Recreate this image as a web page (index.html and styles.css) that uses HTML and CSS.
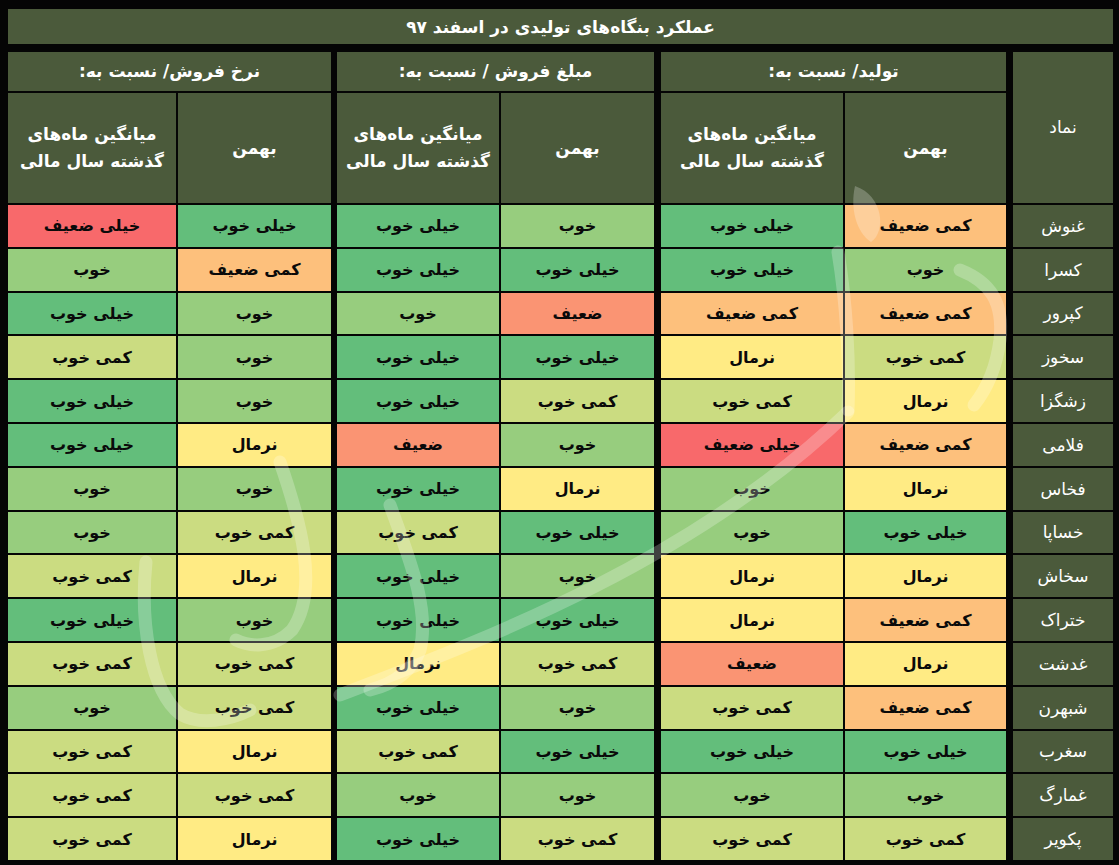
FILE: index.html
```html
<!DOCTYPE html>
<html lang="fa" dir="rtl">
<head>
<meta charset="utf-8">
<title>عملکرد بنگاه‌های تولیدی در اسفند ۹۷</title>
<link rel="stylesheet" href="styles.css">
</head>
<body>
<div class="frame">
  <div class="title">عملکرد بنگاه‌های تولیدی در اسفند ٩٧</div>
  <div class="grid">
    <div class="h sym-h">نماد</div>
    <div class="h grp g1">تولید/ نسبت به:</div>
    <div class="h grp g2">مبلغ فروش / نسبت به:</div>
    <div class="h grp g3">نرخ فروش/ نسبت به:</div>
    <div class="h sub s3">بهمن</div>
    <div class="h sub s4">میانگین ماه‌های<br>گذشته سال مالی</div>
    <div class="h sub s6">بهمن</div>
    <div class="h sub s7">میانگین ماه‌های<br>گذشته سال مالی</div>
    <div class="h sub s9">بهمن</div>
    <div class="h sub s10">میانگین ماه‌های<br>گذشته سال مالی</div>

    <div class="row"><div class="sym">غنوش</div><div class="v2">کمی ضعیف</div><div class="v6">خیلی خوب</div><div class="v5">خوب</div><div class="v6">خیلی خوب</div><div class="v6">خیلی خوب</div><div class="v0">خیلی ضعیف</div></div>
    <div class="row"><div class="sym">کسرا</div><div class="v5">خوب</div><div class="v6">خیلی خوب</div><div class="v6">خیلی خوب</div><div class="v6">خیلی خوب</div><div class="v2">کمی ضعیف</div><div class="v5">خوب</div></div>
    <div class="row"><div class="sym">کپرور</div><div class="v2">کمی ضعیف</div><div class="v2">کمی ضعیف</div><div class="v1">ضعیف</div><div class="v5">خوب</div><div class="v5">خوب</div><div class="v6">خیلی خوب</div></div>
    <div class="row"><div class="sym">سخوز</div><div class="v4">کمی خوب</div><div class="v3">نرمال</div><div class="v6">خیلی خوب</div><div class="v6">خیلی خوب</div><div class="v5">خوب</div><div class="v4">کمی خوب</div></div>
    <div class="row"><div class="sym">زشگزا</div><div class="v3">نرمال</div><div class="v4">کمی خوب</div><div class="v4">کمی خوب</div><div class="v6">خیلی خوب</div><div class="v5">خوب</div><div class="v6">خیلی خوب</div></div>
    <div class="row"><div class="sym">فلامی</div><div class="v2">کمی ضعیف</div><div class="v0">خیلی ضعیف</div><div class="v5">خوب</div><div class="v1">ضعیف</div><div class="v3">نرمال</div><div class="v6">خیلی خوب</div></div>
    <div class="row"><div class="sym">فخاس</div><div class="v3">نرمال</div><div class="v5">خوب</div><div class="v3">نرمال</div><div class="v6">خیلی خوب</div><div class="v5">خوب</div><div class="v5">خوب</div></div>
    <div class="row"><div class="sym">خساپا</div><div class="v6">خیلی خوب</div><div class="v5">خوب</div><div class="v6">خیلی خوب</div><div class="v4">کمی خوب</div><div class="v4">کمی خوب</div><div class="v5">خوب</div></div>
    <div class="row"><div class="sym">سخاش</div><div class="v3">نرمال</div><div class="v3">نرمال</div><div class="v5">خوب</div><div class="v6">خیلی خوب</div><div class="v3">نرمال</div><div class="v4">کمی خوب</div></div>
    <div class="row"><div class="sym">ختراک</div><div class="v2">کمی ضعیف</div><div class="v3">نرمال</div><div class="v6">خیلی خوب</div><div class="v6">خیلی خوب</div><div class="v5">خوب</div><div class="v6">خیلی خوب</div></div>
    <div class="row"><div class="sym">غدشت</div><div class="v3">نرمال</div><div class="v1">ضعیف</div><div class="v4">کمی خوب</div><div class="v3">نرمال</div><div class="v4">کمی خوب</div><div class="v4">کمی خوب</div></div>
    <div class="row"><div class="sym">شبهرن</div><div class="v2">کمی ضعیف</div><div class="v4">کمی خوب</div><div class="v5">خوب</div><div class="v6">خیلی خوب</div><div class="v4">کمی خوب</div><div class="v5">خوب</div></div>
    <div class="row"><div class="sym">سغرب</div><div class="v6">خیلی خوب</div><div class="v6">خیلی خوب</div><div class="v6">خیلی خوب</div><div class="v4">کمی خوب</div><div class="v3">نرمال</div><div class="v4">کمی خوب</div></div>
    <div class="row"><div class="sym">غمارگ</div><div class="v5">خوب</div><div class="v5">خوب</div><div class="v5">خوب</div><div class="v5">خوب</div><div class="v4">کمی خوب</div><div class="v4">کمی خوب</div></div>
    <div class="row"><div class="sym">پکویر</div><div class="v4">کمی خوب</div><div class="v4">کمی خوب</div><div class="v4">کمی خوب</div><div class="v6">خیلی خوب</div><div class="v3">نرمال</div><div class="v4">کمی خوب</div></div>
  </div>
  <svg class="watermark" width="1119" height="865" viewBox="0 0 1119 865" aria-hidden="true">
    <g class="wm">
      <path d="M340 695 C470 645 690 565 848 412"/>
      <path d="M838 252 C846 300 850 360 848 410"/>
      <path d="M960 270 C990 282 1004 302 1000 340 C996 370 986 390 974 405"/>
      <path d="M280 462 C300 520 320 590 292 630 C272 650 248 646 236 640"/>
      <path d="M390 505 C410 560 430 610 420 650 C410 675 390 685 370 690"/>
      <path d="M146 562 C140 622 150 690 180 714 C200 726 230 720 250 710"/>
    </g>
    <path class="wm-fill" d="M855 186 C884 196 886 232 871 242 C856 232 850 208 855 186 Z"/>
  </svg>
</div>
</body>
</html>
```

FILE: styles.css
```css
html, body {
  margin: 0;
  padding: 0;
  background: #000;
}

.frame {
  position: relative;
  width: 1119px;
  height: 865px;
  box-sizing: border-box;
  padding: 9px 6px 5px 8px;
  background: #050505;
  direction: rtl;
  font-family: "DejaVu Sans", "Noto Sans", sans-serif;
}

.title {
  height: 35px;
  margin-bottom: 8px;
  background: #4b5a3b;
  color: #fff;
  font-size: 17px;
  font-weight: bold;
  display: flex;
  align-items: center;
  justify-content: center;
}

.grid {
  display: grid;
  direction: rtl;
  grid-template-columns: 100px 3px 161px 182px 3px 153px 162px 2px 153px 168px;
  grid-template-rows: 39px 110px repeat(15, 41.8px);
  gap: 2px;
  height: 808px;
}

.h {
  background: #4b5a3b;
  color: #fff;
  font-size: 17px;
  font-weight: bold;
  display: flex;
  align-items: center;
  justify-content: center;
  text-align: center;
  line-height: 27px;
}

.sym-h { grid-row: 1 / 3; grid-column: 1; font-weight: normal; }
.g1 { grid-row: 1; grid-column: 3 / 5; }
.g2 { grid-row: 1; grid-column: 6 / 8; }
.g3 { grid-row: 1; grid-column: 9 / 11; }
.sub { grid-row: 2; }
.s3 { grid-column: 3; }
.s4 { grid-column: 4; }
.s6 { grid-column: 6; }
.s7 { grid-column: 7; }
.s9 { grid-column: 9; }
.s10 { grid-column: 10; }

.row { display: contents; }

.row > div {
  display: flex;
  align-items: center;
  justify-content: center;
  font-size: 16px;
  font-weight: bold;
  color: #0a0a0a;
}

.row > :nth-child(1) { grid-column: 1; }
.row > :nth-child(2) { grid-column: 3; }
.row > :nth-child(3) { grid-column: 4; }
.row > :nth-child(4) { grid-column: 6; }
.row > :nth-child(5) { grid-column: 7; }
.row > :nth-child(6) { grid-column: 9; }
.row > :nth-child(7) { grid-column: 10; }

.row > .sym {
  background: #4b5a3b;
  color: #fff;
  font-weight: normal;
  font-size: 17px;
}

.v0 { background: #f8696b; }
.v1 { background: #fa9473; }
.v2 { background: #fdc07c; }
.v3 { background: #ffeb84; }
.v4 { background: #cbdc81; }
.v5 { background: #97cd7e; }
.v6 { background: #63be7b; }

.watermark {
  position: absolute;
  left: 0;
  top: 0;
  pointer-events: none;
}

.wm path {
  fill: none;
  stroke: rgba(255, 255, 255, 0.24);
  stroke-width: 13;
  stroke-linecap: round;
}

.wm-fill {
  fill: rgba(255, 255, 255, 0.24);
}
```
